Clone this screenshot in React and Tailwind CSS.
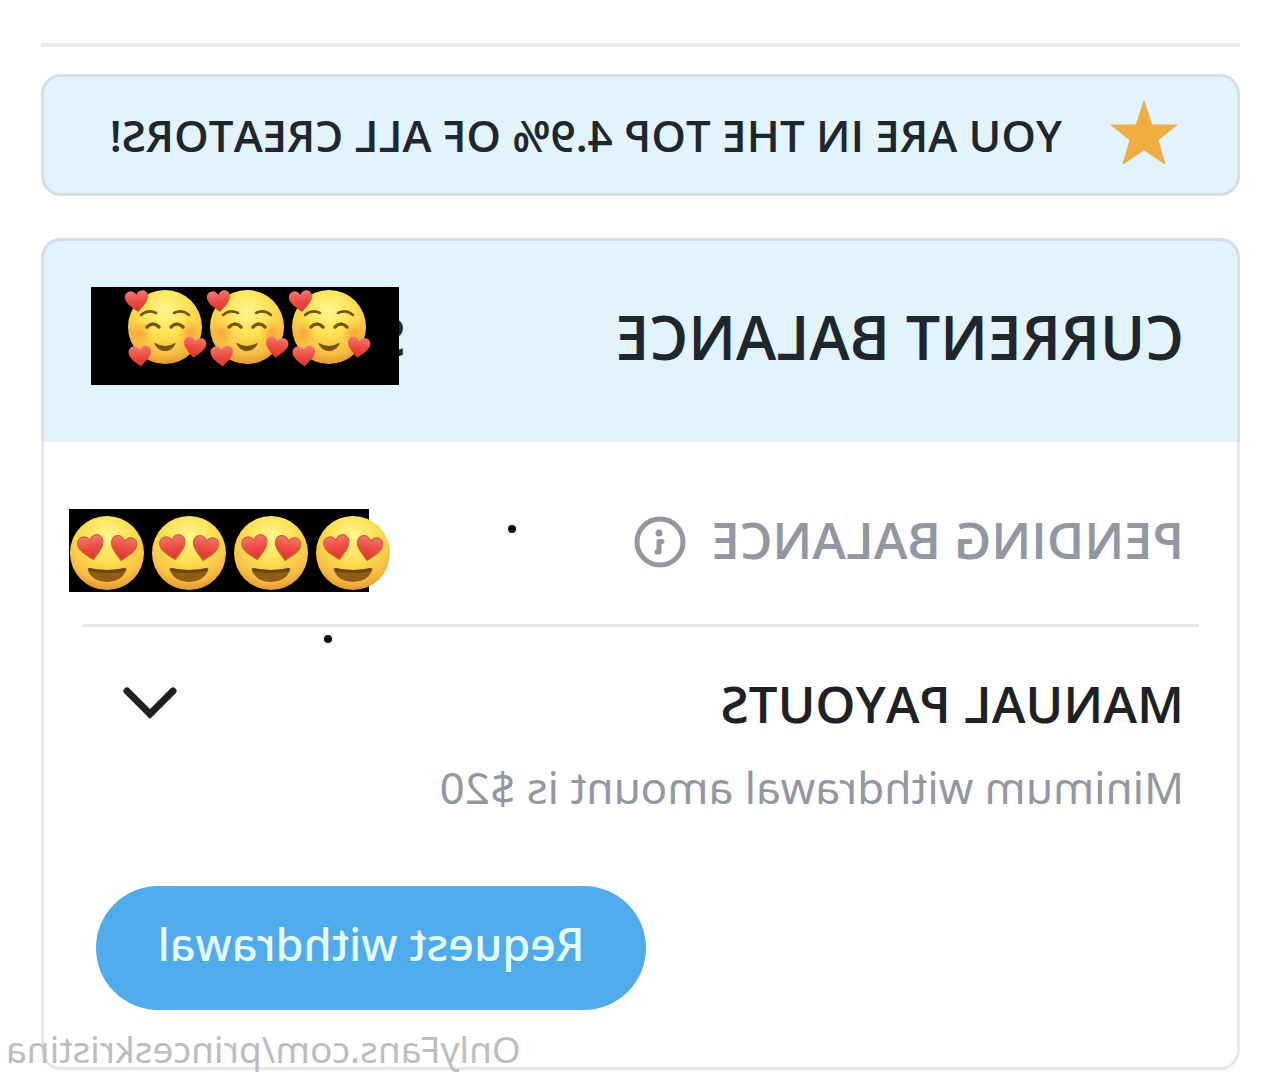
import React, { useState } from "react";

const HEART =
  "M12 22C5 16 1 12 1 7.6 1 4.4 3.4 2 6.4 2c2.4 0 4.4 1.4 5.6 3.8C13.2 3.4 15.2 2 17.6 2 20.6 2 23 4.4 23 7.6 23 12 19 16 12 22z";

const EmojiDefs = () => (
  <defs>
    <radialGradient id="face" cx="0.5" cy="0.28" r="0.74">
      <stop offset="0" stopColor="#fff68f" />
      <stop offset="0.45" stopColor="#fde050" />
      <stop offset="0.8" stopColor="#f6bd42" />
      <stop offset="1" stopColor="#e0922f" />
    </radialGradient>
    <radialGradient id="cheek">
      <stop offset="0" stopColor="#f58a2e" stopOpacity="0.6" />
      <stop offset="1" stopColor="#f58a2e" stopOpacity="0" />
    </radialGradient>
    <linearGradient id="heart" x1="0" y1="0" x2="0" y2="1">
      <stop offset="0" stopColor="#f4776f" />
      <stop offset="0.5" stopColor="#ec4a40" />
      <stop offset="1" stopColor="#d8352f" />
    </linearGradient>
  </defs>
);

const LoveFace = ({ x, y }) => (
  <g transform={`translate(${x} ${y})`}>
    <circle r="37" fill="url(#face)" />
    <circle cx="-25" cy="6" r="12" fill="url(#cheek)" />
    <circle cx="25" cy="6" r="12" fill="url(#cheek)" />
    <g fill="none" stroke="#7c5212" strokeLinecap="round">
      <path d="M-24-12Q-17-18-9-14" strokeWidth="2.600" />
      <path d="M9-14Q17-18 24-12" strokeWidth="2.600" />
      <path d="M-18 0Q-12-6-6 0" strokeWidth="3.400" />
      <path d="M6 0Q12-6 18 0" strokeWidth="3.400" />
    </g>
    <path d="M-10 16Q0 22 10 16Q11 16 10 18Q6 24 0 24Q-6 24-10 18Q-11 16-10 16z" fill="#7c5212" />
    <path d={HEART} fill="url(#heart)" transform="translate(-42 -37) rotate(-6) scale(1.06)" />
    <path d={HEART} fill="url(#heart)" transform="translate(-38 18) rotate(-4) scale(1.02)" />
    <path d={HEART} fill="url(#heart)" transform="translate(19 7) rotate(7) scale(1.02)" />
  </g>
);

const HeartEyesFace = ({ x, y }) => (
  <g transform={`translate(${x} ${y})`}>
    <circle r="37" fill="url(#face)" />
    <path d={HEART} fill="url(#heart)" stroke="#c9662c" transform="translate(-32 -17) rotate(-10) scale(1.16 1.2)" />
    <path d={HEART} fill="url(#heart)" stroke="#c9662c" transform="translate(5 -21) rotate(10) scale(1.16 1.2)" />
    <path d="M-18 15Q0 19 18 15Q20 15 19 18Q14 29 0 29Q-14 29-19 18Q-20 15-18 15z" fill="#8f5e14" />
    <path d="M-18 15Q0 19 18 15Q19 15 18 18Q0 22-18 18Q-19 15-18 15z" fill="#6b460c" />
  </g>
);

const StarIcon = () => (
  <svg viewBox="0 0 68 66" className="mb-1 h-[66px] w-[68px] shrink-0" aria-hidden="true">
    <path
      d="M34 1L42 25H67L48 40L55 64L34 50L13 64L20 40L1 25H26z"
      fill="#f0ad3f"
      stroke="#e3ad5c"
      strokeLinejoin="round"
    />
  </svg>
);

const InfoIcon = () => (
  <svg viewBox="0 0 52 52" className="size-[52px]" fill="none" stroke="#9297a3" aria-hidden="true">
    <circle cx="26" cy="26" r="23" strokeWidth="5" />
    <circle cx="27" cy="17" r="3.500" fill="#9297a3" stroke="none" />
    <path d="M24 25.500H27V36H29" strokeWidth="5" strokeLinecap="round" strokeLinejoin="round" />
  </svg>
);

const ChevronIcon = () => (
  <svg viewBox="0 0 54 34" className="w-[54px] h-[34px]" fill="none" aria-hidden="true">
    <path d="M4 5L27 28L50 5" stroke="#202124" strokeWidth="7" strokeLinecap="round" />
  </svg>
);

const App = () => {
  const [open, setOpen] = useState(true);

  return (
    // the whole page is shown flipped, like a selfie camera capture
    <main className="relative -scale-x-100 bg-white px-[41px] pt-[43px] pb-[9px] font-['Open_Sans','Noto_Sans',sans-serif] text-[#20262d]">
      <hr className="h-1 border-0 bg-[#ebebeb]" />

      <section className="mt-[27px] flex h-[122px] items-center gap-12 rounded-[20px] border-3 border-[#d3e0e8] bg-[#e2f3fc] pl-[59px]">
        <StarIcon />
        <p className="whitespace-nowrap text-[44px] leading-[60px] font-semibold">
          YOU ARE IN THE TOP 4.9% OF ALL CREATORS!
        </p>
      </section>

      <section className="mt-[42px] rounded-[20px] border-3 border-[#e8e8e9]">
        <header className="-mx-[3px] -mt-[3px] flex h-[204px] items-start justify-between rounded-t-[20px] border-3 border-b-0 border-[#d3e0e8] bg-[#e2f3fc] pt-[46px] pr-[47px] pl-[53px]">
          <h1 className="whitespace-nowrap text-[61px] leading-[100px] font-semibold">CURRENT BALANCE</h1>
          <div className="relative">
            <span className="absolute top-0 -left-[7px] text-[61px] leading-[100px] font-semibold">$</span>
            <svg viewBox="0 0 308 98" className="relative h-[98px] w-[308px] -scale-x-100" role="img" aria-label="Hidden balance">
              <EmojiDefs />
              <rect width="308" height="98" fill="#000" />
              <LoveFace x={74} y={40} />
              <LoveFace x={156} y={40} />
              <LoveFace x={238} y={40} />
            </svg>
          </div>
        </header>

        <div className="flex items-start pt-[67px] pr-[25px] pl-[53px]">
          <h2 className="whitespace-nowrap text-[51px] leading-[60px] font-semibold text-[#9297a3]">PENDING BALANCE</h2>
          <button type="button" aria-label="About pending balance" className="mt-[7px] ml-[26px]">
            <InfoIcon />
          </button>
          <span className="mt-4 ml-[118px] size-2 rounded-full bg-black"></span>
          <svg viewBox="0 0 321 83" className="ml-auto h-[83px] w-[321px] -scale-x-100" role="img" aria-label="Hidden pending balance">
            <rect width="300" height="83" fill="#000" />
            <HeartEyesFace x={38} y={44} />
            <HeartEyesFace x={120} y={44} />
            <HeartEyesFace x={202} y={44} />
            <HeartEyesFace x={284} y={44} />
          </svg>
        </div>

        <div className="relative mx-[38px] mt-8">
          <hr className="h-[3px] border-0 bg-[#e8e8e9]" />
          <span className="absolute top-[11px] right-[242px] size-2 rounded-full bg-black"></span>
        </div>

        <button
          type="button"
          aria-expanded={open}
          onClick={() => setOpen(!open)}
          className="mt-10 flex w-full items-center justify-between pr-[79px] pl-[53px]"
        >
          <span className="whitespace-nowrap text-[51px] leading-[72px] font-semibold text-[#202124]">MANUAL PAYOUTS</span>
          <ChevronIcon />
        </button>
        <p className="mt-5 pl-[53px] font-['Noto_Sans',sans-serif] text-[44px] leading-[56px] text-[#9297a3]">
          Minimum withdrawal amount is $20
        </p>

        <div className="flex justify-end pt-[71px] pr-[52px] pb-[57px]">
          <button
            type="button"
            className="h-[124px] w-[550px] rounded-full bg-[#4fabea] pb-2 font-['Noto_Sans',sans-serif] text-[45px] leading-[60px] font-medium text-[#e4fbff]"
          >
            Request withdrawal
          </button>
        </div>
      </section>

      <a
        href="#profile"
        className="absolute right-[6px] bottom-0 font-['Noto_Sans',sans-serif] text-[37px] leading-[60px] text-[#bdbdbd]"
      >
        OnlyFans.com/princeskristina
      </a>
    </main>
  );
};

export default App;
